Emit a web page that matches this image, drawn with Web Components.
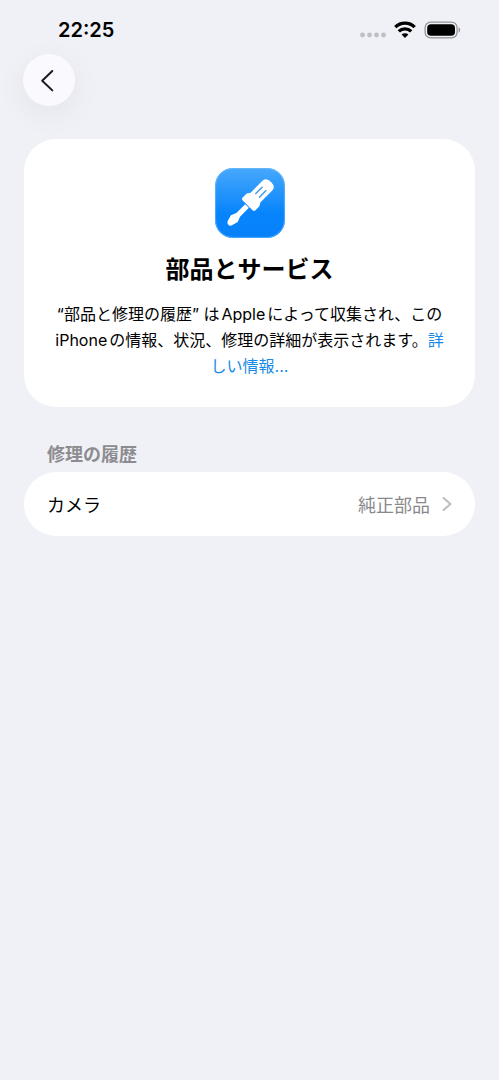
<!DOCTYPE html>
<html lang="ja">
<head>
<meta charset="utf-8">
<meta name="viewport" content="width=device-width, initial-scale=1">
<title>部品とサービス</title>
<style>
  html { background: #f0f1f6; }
  body { margin: 0; color: #000; font-family: Inter, "Noto Sans CJK JP", sans-serif; }
</style>
</head>
<body>
<settings-page>
  <status-bar slot="top" time="22:25"></status-bar>
  <nav-bar slot="top"></nav-bar>
  <intro-card heading="部品とサービス">“部品と修理の履歴” はAppleによって収集され、このiPhoneの情報、状況、修理の詳細が表示されます。<text-link href="#more">詳しい情報...</text-link></intro-card>
  <list-section heading="修理の履歴">
    <list-row href="#camera" value="純正部品">カメラ</list-row>
  </list-section>
</settings-page>
<script>
  const define = (name, html, setup) => customElements.define(name, class extends HTMLElement {
    constructor() {
      super();
      this.attachShadow({ mode: 'open' }).innerHTML = html;
    }
    connectedCallback() { if (setup) setup(this, this.shadowRoot); }
  });

  define('settings-page', `
    <style>
      :host { display: block; min-height: 100vh; box-sizing: border-box; padding-bottom: 32px; }
      main { display: flex; flex-direction: column; gap: 32px; padding: 33px 24px 0; }
    </style>
    <slot name="top"></slot>
    <main><slot></slot></main>`);

  define('status-bar', `
    <style>
      :host { display: flex; align-items: center; justify-content: space-between; height: 54px; padding: 6px 38px 0 58px; box-sizing: border-box; }
      time { font-size: 20px; line-height: 24px; font-weight: 600; }
      .icons { display: flex; align-items: center; gap: 8px; }
      svg { display: block; }
    </style>
    <time></time>
    <div class="icons">
      <svg width="26" height="18" viewBox="0 0 26 18" fill="#bebfc4" aria-label="圏外" role="img">
        <circle cx="2.5" cy="14" r="2.4"/><circle cx="9.5" cy="14" r="2.4"/><circle cx="16.5" cy="14" r="2.4"/><circle cx="23.5" cy="14" r="2.4"/>
      </svg>
      <svg width="22" height="18" viewBox="0 0 22 18" fill="none" stroke="#000" stroke-width="3.3" aria-label="Wi-Fi" role="img">
        <path d="M1.3 6.2a13.8 13.8 0 0 1 19.4 0"/>
        <path d="M4.8 10.4a8.7 8.7 0 0 1 12.4 0"/>
        <path d="M11 17l-3.4-3.5a4.9 4.9 0 0 1 6.8 0z" fill="#000" stroke="none"/>
      </svg>
      <svg width="37" height="18" viewBox="0 0 37 18" aria-label="バッテリー" role="img">
        <rect x="1.1" y="1.1" width="32" height="15.8" rx="5.6" fill="none" stroke="#929397" stroke-width="1.3"/>
        <rect x="3.2" y="3.2" width="27.8" height="11.6" rx="3.8"/>
        <path d="M34.7 6.3c1.9.8 1.9 4.6 0 5.4z" fill="#929397"/>
      </svg>
    </div>`, (el, root) => { root.querySelector('time').textContent = el.getAttribute('time'); });

  define('nav-bar', `
    <style>
      :host { display: flex; padding: 0 23px; }
      button { display: grid; place-items: center; width: 52px; height: 52px; padding: 0; border: 0; border-radius: 50%; background: #fafafe; box-shadow: 0 8px 32px rgb(0 0 0 / 6%); }
    </style>
    <button type="button" aria-label="戻る">
      <svg width="24" height="24" viewBox="0 0 24 24" fill="none" stroke="#1b1b1d" stroke-width="2" stroke-linecap="round" stroke-linejoin="round"><path d="M15.3 3 5.2 12.8l10.1 9.6"/></svg>
    </button>`);

  define('tools-icon', `
    <style>:host { display: block; } svg { display: block; }</style>
    <svg width="70" height="70" viewBox="0 0 70 70" aria-hidden="true">
      <defs><linearGradient id="g" x2="0" y2="1"><stop stop-color="#47a8fc"/><stop offset=".65" stop-color="#0784fc"/><stop offset="1" stop-color="#0881fa"/></linearGradient></defs>
      <rect width="70" height="70" rx="18" fill="url(#g)"/>
      <rect x=".6" y=".6" width="68.8" height="68.8" rx="17.4" fill="none" stroke="#7cc4f5" stroke-opacity=".6"/>
      <g transform="translate(34.5 35.5) rotate(45)" fill="#fff">
        <path d="M-6.9-25.6Q-6.5-30.5 0-30.5T6.9-25.6V-8.4L9-5V.6Q9 2.6 7 2.6H-7Q-9 2.6-9 .6V-5L-6.9-8.4Z"/>
        <path d="M-2.6 3.5H2.6V16L4.8 21.5 3 27.8Q2.3 30 0 30T-3 27.8L-4.8 21.5-2.6 16Z"/>
        <path d="M-2.6-20.5V-11.5M2.6-20.5V-11.5" fill="none" stroke="#3d97ea" stroke-width="1.4" stroke-linecap="round"/>
      </g>
    </svg>`);

  define('intro-card', `
    <style>
      :host { display: flex; flex-direction: column; align-items: center; padding: 29px 25px 28px; border-radius: 32px; background: #fff; text-align: center; }
      h1 { margin: 12px 0 15px; font-size: 24px; line-height: 36px; font-weight: 600; font-family: "Noto Sans CJK JP", sans-serif; }
      p { margin: 0; font-size: 16px; line-height: 26px; text-autospace: normal; }
    </style>
    <tools-icon></tools-icon>
    <h1></h1>
    <p><slot></slot></p>`, (el, root) => { root.querySelector('h1').textContent = el.getAttribute('heading'); });

  define('text-link', `<style>:host { display: inline; } a { color: #168ae6; text-decoration: none; }</style><a><slot></slot></a>`,
    (el, root) => { root.querySelector('a').href = el.getAttribute('href'); });

  define('list-section', `
    <style>
      :host { display: block; }
      h2 { margin: 0; padding: 0 23px 5px; font-size: 18px; line-height: 28px; font-weight: 600; font-family: "Noto Sans CJK JP", sans-serif; color: #8c8c91; }
      .group { border-radius: 32px; background: #fff; overflow: hidden; }
    </style>
    <h2></h2>
    <div class="group"><slot></slot></div>`, (el, root) => { root.querySelector('h2').textContent = el.getAttribute('heading'); });

  define('list-row', `
    <style>
      :host { display: block; }
      a { display: flex; align-items: center; min-height: 64px; padding: 0 23px; box-sizing: border-box; color: inherit; text-decoration: none; font-size: 18px; line-height: 28px; font-family: "Noto Sans CJK JP", sans-serif; }
      .label { flex: 1; }
      .value { color: #89898d; }
      svg { margin-left: 12px; }
    </style>
    <a><span class="label"><slot></slot></span><span class="value"></span>
      <svg width="10" height="16" viewBox="0 0 10 16" fill="none" stroke="#bdbdc0" stroke-width="2" stroke-linecap="round" stroke-linejoin="round" aria-hidden="true"><path d="M1.5 2 8.5 8l-7 6"/></svg>
    </a>`, (el, root) => {
      root.querySelector('a').href = el.getAttribute('href');
      root.querySelector('.value').textContent = el.getAttribute('value');
    });
</script>
</body>
</html>
